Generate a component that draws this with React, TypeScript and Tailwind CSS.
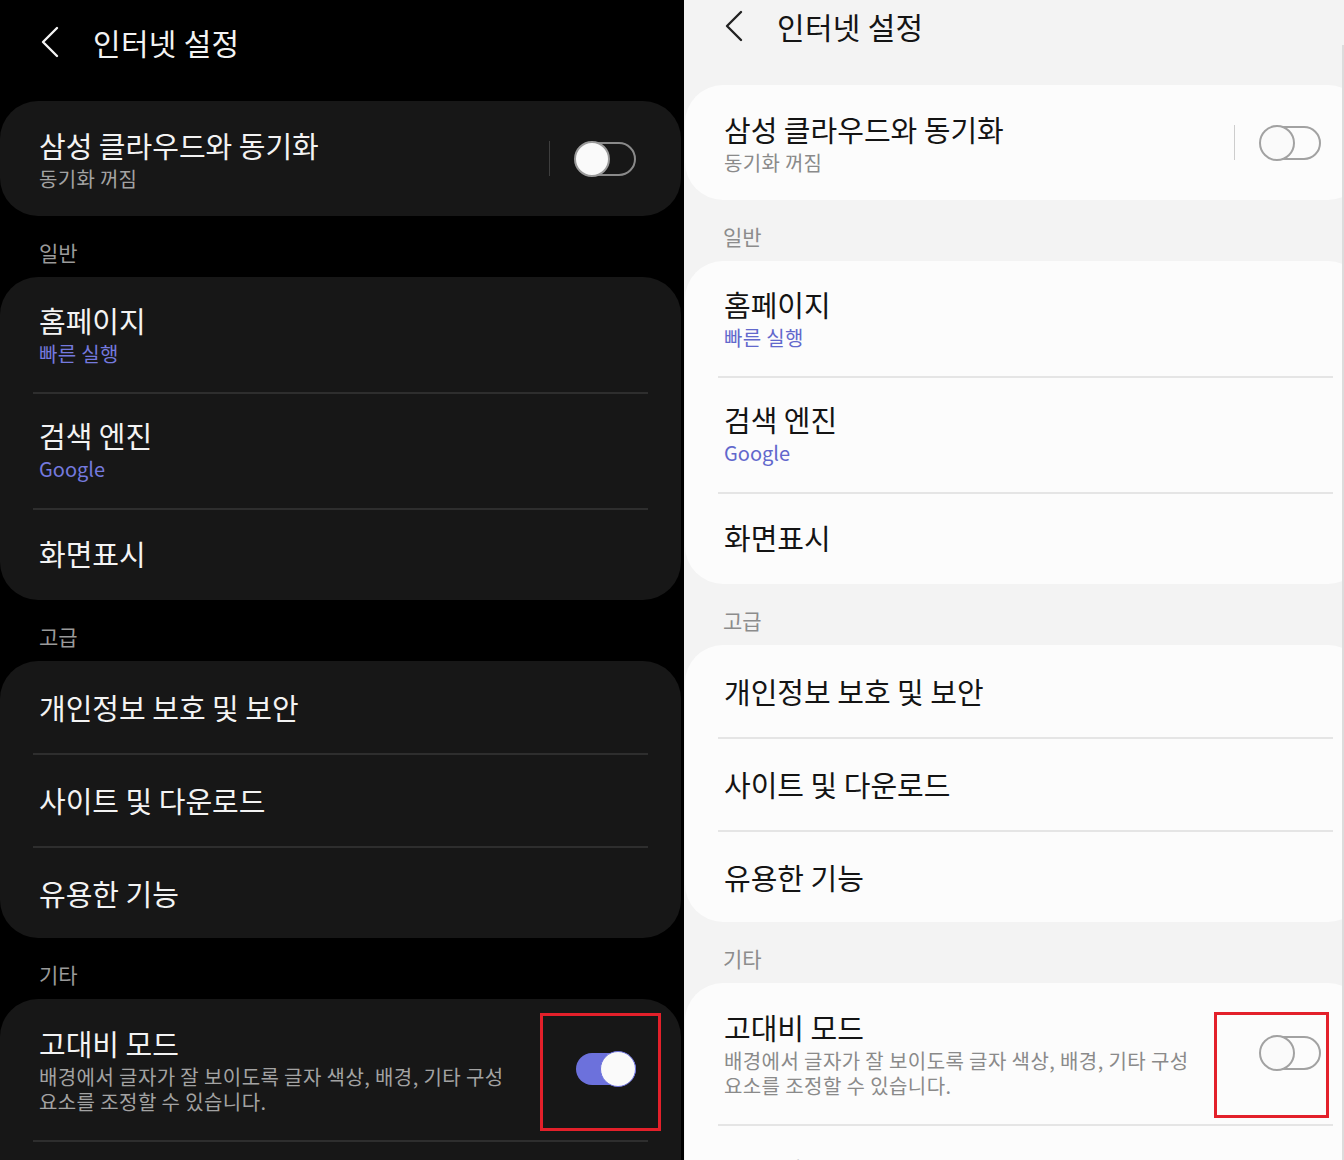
import React from "react";

type Theme = {
  bg: string;
  card: string;
  title: string;
  sub: string;
  head: string;
  accent: string;
  line: string;
  vline: string;
  icon: string;
  trackOff: string;
  thumbOff: string;
};

const DARK: Theme = {
  bg: "bg-black",
  card: "bg-[#171717]",
  title: "text-[#f3f3f3]",
  sub: "text-[#a3a3a3]",
  head: "text-[#9a9a9a]",
  accent: "text-[#7479de]",
  line: "bg-[#2e2e2e]",
  vline: "bg-[#3e3e3e]",
  icon: "#f3f3f3",
  trackOff: "border-[#8a8a8a]",
  thumbOff: "bg-[#fafafa] border-[#9a9a9a]",
};

const LIGHT: Theme = {
  bg: "bg-[#f3f3f3]",
  card: "bg-[#fcfcfc]",
  title: "text-[#141414]",
  sub: "text-[#8a8a8a]",
  head: "text-[#8c8c8c]",
  accent: "text-[#6268cc]",
  line: "bg-[#e5e5e5]",
  vline: "bg-[#cdcdcd]",
  icon: "#222222",
  trackOff: "border-[#a2a2a2]",
  thumbOff: "bg-[#fafafa] border-[#a2a2a2]",
};

function Toggle({ t, on }: { t: Theme; on?: boolean }) {
  if (on) {
    return (
      <div className="relative h-[36px] w-[62px] shrink-0">
        <div className="absolute right-0 top-[2px] h-[32px] w-[60px] rounded-full bg-[#6c71dc]" />
        <div className="absolute right-0 top-0 h-[36px] w-[36px] rounded-full border-[1.5px] border-[#6c71dc] bg-[#fafafa]" />
      </div>
    );
  }
  return (
    <div className="relative h-[36px] w-[62px] shrink-0">
      <div className={`absolute right-0 top-[1px] h-[34px] w-[53px] rounded-full border-2 ${t.trackOff}`} />
      <div className={`absolute left-0 top-0 h-[36px] w-[36px] rounded-full border-2 ${t.thumbOff}`} />
    </div>
  );
}

function Title({ t, children }: { t: Theme; children: React.ReactNode }) {
  return <div className={`text-[29px] leading-[34px] ${t.title}`}>{children}</div>;
}

function Divider({ t }: { t: Theme }) {
  return <div className={`mx-[33px] h-[2px] ${t.line}`} />;
}

function Section({ t, label }: { t: Theme; label: string }) {
  return (
    <div className={`h-[61px] pl-[39px] pt-[24px] text-[21px] leading-[24px] ${t.head}`}>{label}</div>
  );
}

function Panel({ t, light }: { t: Theme; light?: boolean }) {
  const card = `w-[681px] rounded-[38px] ${t.card} ${light ? "ml-[1px]" : ""}`;
  return (
    <div className={`relative h-full shrink-0 overflow-hidden ${t.bg} ${light ? "w-[660px]" : "w-[684px]"}`}>
      <div className={light ? "-mt-[16px]" : ""}>
        {/* 헤더 */}
        <div className="h-[101px] pt-[22px]">
          <div className="flex h-[40px] items-center">
            <svg width="20" height="32" viewBox="0 0 20 32" className="ml-[40px]">
              <path d="M17 2 L3 16 L17 30" fill="none" stroke={t.icon} strokeWidth="2.4" strokeLinecap="round" strokeLinejoin="round" />
            </svg>
            <span className={`ml-[33px] text-[30px] leading-[40px] tracking-[0.3px] ${t.title}`}>인터넷 설정</span>
          </div>
        </div>

        {/* 삼성 클라우드 */}
        <div className={`${card} flex h-[115px]`}>
          <div className="pl-[39px] pt-[27px]">
            <Title t={t}>삼성 클라우드와 동기화</Title>
            <div className={`text-[20px] leading-[34px] tracking-[0.3px] ${t.sub}`}>동기화 꺼짐</div>
          </div>
          <div className="ml-auto mr-[45px] flex items-center">
            <div className={`h-[35px] w-px ${t.vline}`} />
            <div className="ml-[24px]">
              <Toggle t={t} />
            </div>
          </div>
        </div>

        <Section t={t} label="일반" />
        <div className={card}>
          <div className="h-[115px] pl-[39px] pt-[26px]">
            <Title t={t}>홈페이지</Title>
            <div className={`text-[20px] leading-[34px] tracking-[0.3px] ${t.accent}`}>빠른 실행</div>
          </div>
          <Divider t={t} />
          <div className="h-[114px] pl-[39px] pt-[24px]">
            <Title t={t}>검색 엔진</Title>
            <div className={`text-[20px] leading-[34px] ${t.accent}`}>Google</div>
          </div>
          <Divider t={t} />
          <div className="h-[90px] pl-[39px] pt-[26px]">
            <Title t={t}>화면표시</Title>
          </div>
        </div>

        <Section t={t} label="고급" />
        <div className={card}>
          <div className="h-[92px] pl-[39px] pt-[29px]">
            <Title t={t}>개인정보 보호 및 보안</Title>
          </div>
          <Divider t={t} />
          <div className="h-[91px] pl-[39px] pt-[28px]">
            <Title t={t}>사이트 및 다운로드</Title>
          </div>
          <Divider t={t} />
          <div className="h-[90px] pl-[39px] pt-[28px]">
            <Title t={t}>유용한 기능</Title>
          </div>
        </div>

        <Section t={t} label="기타" />
        <div className={`${card} relative`}>
          <div className="flex h-[141px]">
            <div className="pl-[39px] pt-[27px]">
              <Title t={t}>고대비 모드</Title>
              <div className={`mt-[4px] text-[20px] leading-[25px] tracking-[0.4px] ${t.sub}`}>
                배경에서 글자가 잘 보이도록 글자 색상, 배경, 기타 구성
                <br />
                요소를 조정할 수 있습니다.
              </div>
            </div>
            <div className="ml-auto mr-[45px] mt-[52px]">
              <Toggle t={t} on={!light} />
            </div>
          </div>
          <Divider t={t} />
          <div className="h-[92px] pl-[39px] pt-[29px]">
            {light && <Title t={t}>문의하기</Title>}
          </div>
          {/* 강조 표시 */}
          <div
            className={`absolute border-[3px] border-[#e3202a] ${
              light ? "left-[529px] top-[29px] h-[106px] w-[115px]" : "left-[540px] top-[14px] h-[118px] w-[121px]"
            }`}
          />
        </div>
      </div>
      {light && <div className="absolute right-0 top-[45px] bottom-0 w-[2px] bg-[#dcdcdc]" />}
    </div>
  );
}

export default function App() {
  return (
    <div className="flex h-[1160px] w-[1344px] overflow-hidden font-['Noto_Sans_CJK_KR','Noto_Sans',sans-serif]">
      <Panel t={DARK} />
      <Panel t={LIGHT} light />
    </div>
  );
}
